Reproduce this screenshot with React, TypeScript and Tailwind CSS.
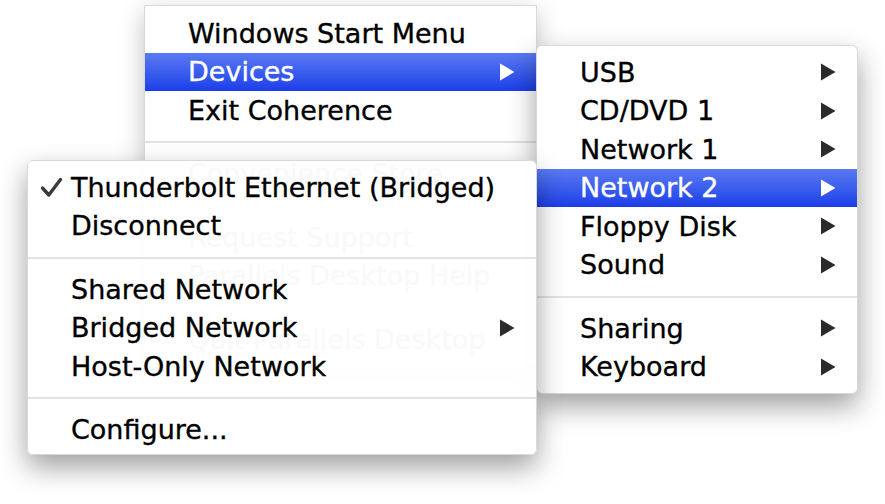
type Item =
  | { kind: "item"; label: string; sub?: boolean; active?: boolean; checked?: boolean }
  | { kind: "sep" };

const mainItems: Item[] = [
  { kind: "item", label: "Windows Start Menu" },
  { kind: "item", label: "Devices", sub: true, active: true },
  { kind: "item", label: "Exit Coherence" },
  { kind: "sep" },
  { kind: "item", label: "Convenience Store" },
  { kind: "sep" },
  { kind: "item", label: "Request Support" },
  { kind: "item", label: "Parallels Desktop Help" },
  { kind: "sep" },
  { kind: "item", label: "Quit Parallels Desktop" },
];

const deviceItems: Item[] = [
  { kind: "item", label: "USB", sub: true },
  { kind: "item", label: "CD/DVD 1", sub: true },
  { kind: "item", label: "Network 1", sub: true },
  { kind: "item", label: "Network 2", sub: true, active: true },
  { kind: "item", label: "Floppy Disk", sub: true },
  { kind: "item", label: "Sound", sub: true },
  { kind: "sep" },
  { kind: "item", label: "Sharing", sub: true },
  { kind: "item", label: "Keyboard", sub: true },
];

const networkItems: Item[] = [
  { kind: "item", label: "Thunderbolt Ethernet (Bridged)", checked: true },
  { kind: "item", label: "Disconnect" },
  { kind: "sep" },
  { kind: "item", label: "Shared Network" },
  { kind: "item", label: "Bridged Network", sub: true },
  { kind: "item", label: "Host-Only Network" },
  { kind: "sep" },
  { kind: "item", label: "Configure..." },
];

function Arrow({ active }: { active?: boolean }) {
  return (
    <svg width="16" height="18" viewBox="0 0 16 18" className="shrink-0">
      <path d="M1 0.5 L15.5 9 L1 17.5 Z" fill={active ? "#ffffff" : "#2b2b2b"} />
    </svg>
  );
}

function Check() {
  return (
    <svg width="23" height="21" viewBox="0 0 23 21">
      <path
        d="M2.5 11 L8.8 18 L20.5 2.5"
        fill="none"
        stroke="#3a3a3a"
        strokeWidth="3.4"
        strokeLinecap="round"
        strokeLinejoin="round"
      />
    </svg>
  );
}

function MenuRows({ items }: { items: Item[] }) {
  return (
    <>
      {items.map((it, i) =>
        it.kind === "sep" ? (
          <div key={i} className="flex h-[25px] items-center">
            <div className="h-[2px] w-full bg-[#e3e3e3]" />
          </div>
        ) : (
          <div
            key={i}
            className={
              it.active
                ? "flex h-[38.5px] items-center bg-gradient-to-b from-[#5b79f3] to-[#1d3ce8] pl-[12px] pr-[21px] text-white"
                : "flex h-[38.5px] items-center pl-[12px] pr-[21px] text-black"
            }
          >
            <span className="flex w-[31px] shrink-0 items-center">{it.checked && <Check />}</span>
            <span className="flex-1 whitespace-nowrap [-webkit-text-stroke:0.35px_currentColor]">
              {it.label}
            </span>
            {it.sub && <Arrow active={it.active} />}
          </div>
        )
      )}
    </>
  );
}

export default function App() {
  return (
    <div className="relative h-[504px] w-[885px] overflow-hidden bg-white font-['DejaVu_Sans',sans-serif] text-[27px] leading-none">
      {/* main menu */}
      <div className="absolute left-[144px] top-[5px] w-[393px] rounded-b-[6px] border border-[#d8d8d8] bg-white pb-[7px] pt-[8px] shadow-[0_8px_24px_rgba(0,0,0,0.25)]">
        <MenuRows items={mainItems} />
      </div>

      {/* devices submenu */}
      <div className="absolute left-[536px] top-[45px] w-[322px] rounded-[6px] border border-[#d8d8d8] bg-white pb-[7px] pt-[7px] shadow-[0_12px_28px_rgba(0,0,0,0.38)]">
        <MenuRows items={deviceItems} />
      </div>

      {/* network submenu, translucent over the main menu */}
      <div className="absolute left-[27px] top-[160px] w-[510px] rounded-[6px] border border-[#d8d8d8] bg-white/[0.975] pb-[5px] pt-[7px] shadow-[0_12px_28px_rgba(0,0,0,0.38)]">
        <MenuRows items={networkItems} />
      </div>
    </div>
  );
}
